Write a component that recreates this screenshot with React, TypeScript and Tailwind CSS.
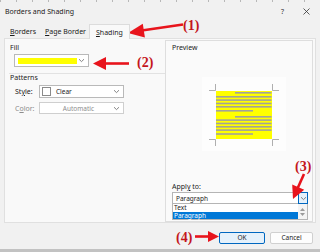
import React from "react";

function Chevron({ className = "" }: { className?: string }) {
  return (
    <svg width="7" height="5" viewBox="0 0 7 5" className={className}>
      <path d="M1 1.2 L3.5 3.6 L6 1.2" fill="none" stroke="#666" strokeWidth="0.8" />
    </svg>
  );
}

function PreviewDoc() {
  const lines1 = [15, 19, 22.3, 25.7, 29, 33];
  const lines2 = [39, 42.3, 45.7, 49, 52.3, 56.2];
  const mk = (ys: number[]) =>
    ys.map((y, i) => {
      const x1 = i === 0 ? 33 : 14;
      const x2 = i === ys.length - 1 ? 51 : 69.5;
      return <rect key={y} x={x1} y={y} width={x2 - x1} height={1.6} fill="#a3a39a" />;
    });
  return (
    <svg width="84" height="74" viewBox="0 0 84 74">
      <rect x="0" y="0" width="84" height="74" fill="#fdfdfd" />
      <rect x="14" y="14" width="56" height="48" fill="#ffff00" />
      {mk(lines1)}
      {mk(lines2)}
      <g stroke="#9a9a9a" strokeWidth="0.8" fill="none">
        <path d="M7 13.5 H13.5 V7" />
        <path d="M77 13.5 H70.5 V7" />
        <path d="M7 62.5 H13.5 V69" />
        <path d="M77 62.5 H70.5 V69" />
      </g>
    </svg>
  );
}

export default function App() {
  return (
    <div className="relative w-[320px] h-[252px] overflow-hidden bg-[#f1f1f1] text-[#1b1b1b] font-['Noto_Sans',sans-serif] flex flex-col">
      {/* top ruler strip */}
      <div className="h-[2px] bg-[repeating-linear-gradient(90deg,#b8b8b8_0px,#b8b8b8_1px,#f1f1f1_1px,#f1f1f1_16px)]" />
      {/* title bar */}
      <div className="h-[18px] flex items-center pl-[5px] pr-[10px]">
        <span className="text-[7px] leading-[9px]">Borders and Shading</span>
        <div className="ml-auto flex items-center gap-[19px]">
          <span className="text-[7px] leading-[9px] text-[#333]">?</span>
          <svg width="7" height="7" viewBox="0 0 7 7">
            <path d="M0.5 0.5 L6.5 6.5 M6.5 0.5 L0.5 6.5" stroke="#333" strokeWidth="0.8" />
          </svg>
        </div>
      </div>
      {/* tabs */}
      <div className="h-[18px] flex items-end pl-[7px] text-[7px] leading-[9px]">
        <div className="h-[14px] flex items-center px-[3px]">
          <span><span className="underline">B</span>orders</span>
        </div>
        <div className="h-[14px] flex items-center ml-[3px] px-[3px]">
          <span><span className="underline">P</span>age Border</span>
        </div>
        <div className="h-[15px] mb-[-1px] z-10 flex items-center ml-0 px-[6px] bg-[#f9f9f9] border border-b-0 border-[#dcdcdc]">
          <span><span className="underline">S</span>hading</span>
        </div>
      </div>
      {/* tab page */}
      <div className="mx-[4px] h-[185px] bg-[#f9f9f9] border border-[#e0e0e0] flex text-[7px] leading-[9px]">
        {/* left column */}
        <div className="w-[160px] flex flex-col">
          <div className="mt-[4px] ml-[5px] h-[9px]">Fill</div>
          <div className="mt-[2px] ml-[9px] w-[75px] h-[13px] bg-white border border-[#b9b9b9] flex items-center pl-[3px] pr-[3px]">
            <div className="w-[59px] h-[6px] bg-[#ffff00]" />
            <Chevron className="ml-auto" />
          </div>
          <div className="mt-[6px] ml-[4px] h-px bg-[#e2e2e2]" />
          <div className="ml-[5px] h-[8px] leading-[8px]">Patterns</div>
          <div className="mt-[3px] flex items-center">
            <div className="ml-[10px] w-[24px]">
              St<span className="underline">y</span>le:
            </div>
            <div className="w-[85px] h-[13px] bg-white border border-[#b9b9b9] flex items-center pl-[2px] pr-[3px]">
              <div className="w-[9px] h-[9px] bg-white border border-[#8a8a8a]" />
              <span className="ml-[5px] text-[6.5px]">Clear</span>
              <Chevron className="ml-auto" />
            </div>
          </div>
          <div className="mt-[4px] flex items-center text-[#8d8d8d]">
            <div className="ml-[10px] w-[24px]">
              C<span className="underline">o</span>lor:
            </div>
            <div className="w-[85px] h-[12px] bg-white border border-[#cfcfcf] flex items-center pr-[3px]">
              <span className="flex-1 text-center text-[6.5px] pl-[4px]">Automatic</span>
              <Chevron />
            </div>
          </div>
        </div>
        {/* preview box */}
        <div className="mt-[1px] w-[148px] h-[182px] bg-[#fafafa] border border-[#dedede] flex flex-col">
          <div className="mt-[2px] ml-[6px] h-[9px]">Preview</div>
          <div className="mt-[25px] ml-[36px]">
            <PreviewDoc />
          </div>
          <div className="mt-[31px] ml-[6px] h-[9px]">
            Appl<span className="underline">y</span> to:
          </div>
          <div className="mt-[1px] ml-[6px] w-[136px] flex flex-col">
            <div className="h-[12px] bg-white border border-[#b5b5b5] flex items-center pl-[3px]">
              <span className="text-[6.5px]">Paragraph</span>
              <div className="ml-auto h-[12px] w-[10px] mr-[-1px] border border-[#0067c0] bg-[#e5f1fb] flex items-center justify-center">
                <Chevron />
              </div>
            </div>
            <div className="h-[16px] bg-white border border-t-0 border-[#b5b5b5] flex">
              <div className="flex-1 flex flex-col text-[6.5px] leading-[7.5px]">
                <div className="pl-[1px]">Text</div>
                <div className="pl-[1px] bg-[#0078d7] text-white">Paragraph</div>
              </div>
              <div className="w-[9px] flex flex-col items-center justify-center bg-[#f4f4f4] gap-[2px]">
                <svg width="5" height="3" viewBox="0 0 5 3"><path d="M0 3 L2.5 0 L5 3 Z" fill="#9a9a9a" /></svg>
                <svg width="5" height="3" viewBox="0 0 5 3"><path d="M0 0 L2.5 3 L5 0 Z" fill="#9a9a9a" /></svg>
              </div>
            </div>
          </div>
        </div>
      </div>
      {/* footer */}
      <div className="flex-1 flex justify-end items-start pt-[9px] pr-[7px] gap-[5px] text-[6.5px]">
        <div className="w-[46px] h-[12px] bg-[#e5f1fb] border border-[#0067c0] rounded-[2px] flex items-center justify-center">OK</div>
        <div className="w-[43px] h-[12px] bg-[#fdfdfd] border border-[#d0d0d0] rounded-[2px] flex items-center justify-center">Cancel</div>
      </div>
      <div className="h-[3px] bg-[#c2c2c2]" />

      {/* annotations */}
      <svg className="absolute inset-0 pointer-events-none" width="320" height="252" viewBox="0 0 320 252">
        <g fill="#e8141c" stroke="#e8141c">
          <line x1="140" y1="30.8" x2="183" y2="24.5" strokeWidth="2.6" />
          <polygon points="128,33 142.8,23.7 144.9,37.5" strokeWidth="0" />
          <line x1="103" y1="63.5" x2="129" y2="63.5" strokeWidth="2.6" />
          <polygon points="93,63.5 106,57 106,70" strokeWidth="0" />
          <line x1="304" y1="174" x2="297.5" y2="188.5" strokeWidth="2.6" />
          <polygon points="293,199 292.2,184.5 304.2,189.7" strokeWidth="0" />
          <line x1="195" y1="236.5" x2="210" y2="236.5" strokeWidth="2.6" />
          <polygon points="219,236.5 208,231 208,242" strokeWidth="0" />
        </g>
      </svg>
      <span className="absolute left-[183px] top-[18px] text-[14px] leading-[16px] font-bold text-[#c4161c] font-['Liberation_Serif',serif]">(1)</span>
      <span className="absolute left-[137px] top-[55px] text-[14px] leading-[16px] font-bold text-[#c4161c] font-['Liberation_Serif',serif]">(2)</span>
      <span className="absolute left-[295px] top-[159px] text-[14px] leading-[16px] font-bold text-[#c4161c] font-['Liberation_Serif',serif]">(3)</span>
      <span className="absolute left-[176px] top-[230px] text-[14px] leading-[16px] font-bold text-[#c4161c] font-['Liberation_Serif',serif]">(4)</span>
    </div>
  );
}
